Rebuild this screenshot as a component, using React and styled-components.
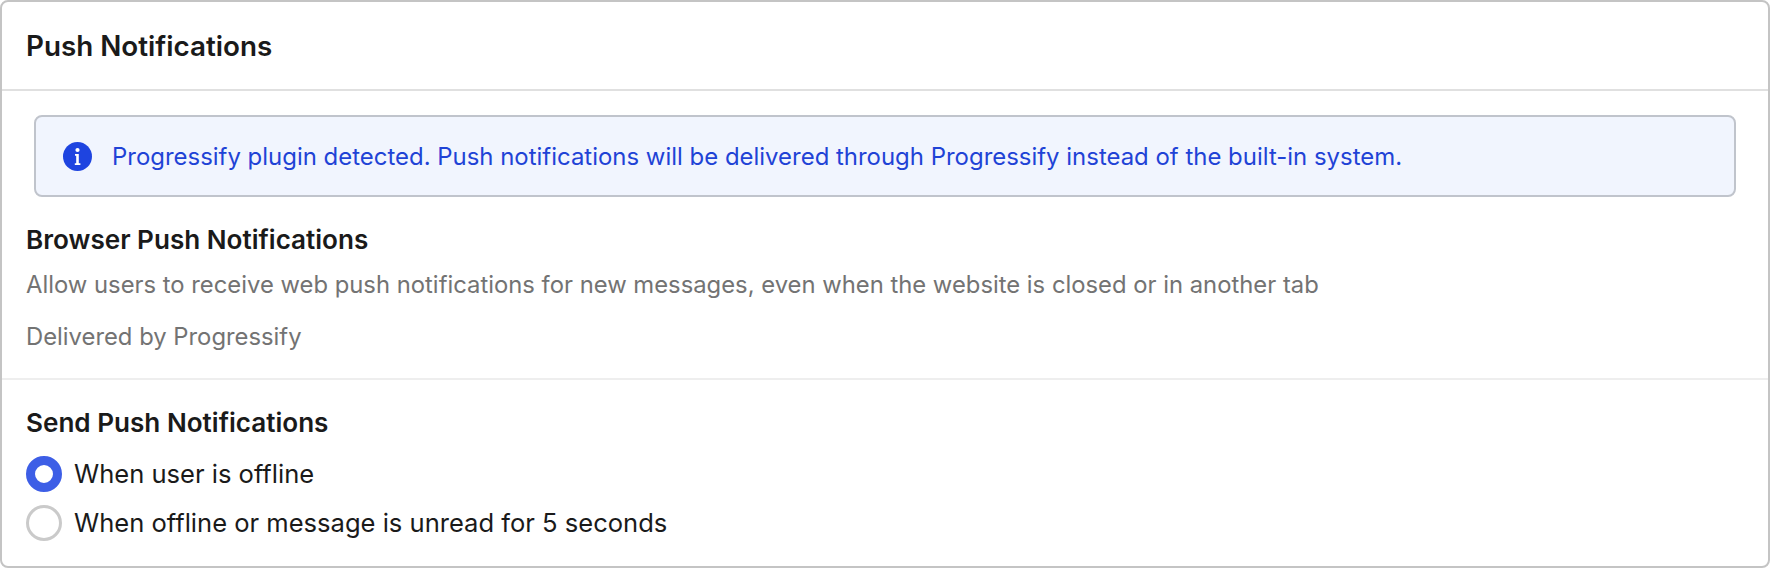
import React from "react";
import styled, { createGlobalStyle } from "styled-components";

const GlobalStyle = createGlobalStyle`
  html, body {
    margin: 0;
    padding: 0;
    background: #fff;
  }
  body {
    font-family: Inter, "Liberation Sans", sans-serif;
    -webkit-font-smoothing: antialiased;
  }
`;

const Card = styled.section`
  box-sizing: border-box;
  width: 1770px;
  height: 568px;
  background: #fff;
  border: 2px solid #c4c4c4;
  border-radius: 8px;
  display: flex;
  flex-direction: column;
`;

const CardHeader = styled.header`
  box-sizing: border-box;
  height: 89px;
  flex: none;
  display: flex;
  align-items: center;
  padding: 0 24px;
  border-bottom: 2px solid #e0e0e0;
`;

const CardTitle = styled.h2`
  margin: 0;
  font-size: 27.8px;
  font-weight: 600;
  color: #1a1a1a;
`;

const Banner = styled.div`
  box-sizing: border-box;
  height: 82px;
  margin: 24px 32px 0;
  padding: 0 27px;
  display: flex;
  align-items: center;
  gap: 20px;
  background: #f1f5fe;
  border: 2px solid #c0c4cc;
  border-radius: 8px;
  color: #1f43d6;
  font-size: 23.94px;
`;

const Section = styled.div`
  padding: ${(props) => props.$padding};
  border-bottom: ${(props) => (props.$divided ? "2px solid #eeeeee" : "none")};
`;

const SectionTitle = styled.h3`
  margin: 0;
  font-size: 26.1px;
  line-height: 28px;
  font-weight: 600;
  color: #1a1a1a;
`;

const Hint = styled.p`
  margin: ${(props) => props.$top}px 0 0;
  font-size: 23.82px;
  line-height: 28px;
  color: #737373;
`;

const RadioList = styled.div`
  display: flex;
  flex-direction: column;
  gap: 13px;
  margin-top: 19px;
`;

const RadioRow = styled.label`
  display: flex;
  align-items: center;
  gap: 12px;
  font-size: 25.55px;
  line-height: 36px;
  color: #1a1a1a;
`;

const RadioMark = styled.span`
  box-sizing: border-box;
  flex: none;
  width: 36px;
  height: 36px;
  border-radius: 50%;
  background: #fff;
  border: ${(props) => (props.$checked ? "9px solid #3d5ee6" : "3px solid #cacaca")};
`;

const InfoIcon = () => (
  <svg width="29" height="29" viewBox="0 0 29 29" style={{ flex: "none" }}>
    <circle cx="14.5" cy="14.5" r="14.5" fill="#1e44e0" />
    <circle cx="14.5" cy="8" r="2.1" fill="#fff" />
    <path d="M12 12h3.8v9.2H17.4v1.8h-5.6v-1.8h1.4v-7.4H12z" fill="#fff" />
  </svg>
);

export default function App() {
  return (
    <>
      <GlobalStyle />
      <Card>
        <CardHeader>
          <CardTitle>Push Notifications</CardTitle>
        </CardHeader>
        <Banner>
          <InfoIcon />
          <span>
            Progressify plugin detected. Push notifications will be delivered through Progressify instead of the built-in system.
          </span>
        </Banner>
        <Section $padding="29px 24px 27px" $divided>
          <SectionTitle>Browser Push Notifications</SectionTitle>
          <Hint $top={17}>
            Allow users to receive web push notifications for new messages, even when the website is closed or in another tab
          </Hint>
          <Hint $top={24}>Delivered by Progressify</Hint>
        </Section>
        <Section $padding="29px 24px 0">
          <SectionTitle>Send Push Notifications</SectionTitle>
          <RadioList>
            <RadioRow>
              <RadioMark $checked />
              When user is offline
            </RadioRow>
            <RadioRow>
              <RadioMark />
              When offline or message is unread for 5 seconds
            </RadioRow>
          </RadioList>
        </Section>
      </Card>
    </>
  );
}
